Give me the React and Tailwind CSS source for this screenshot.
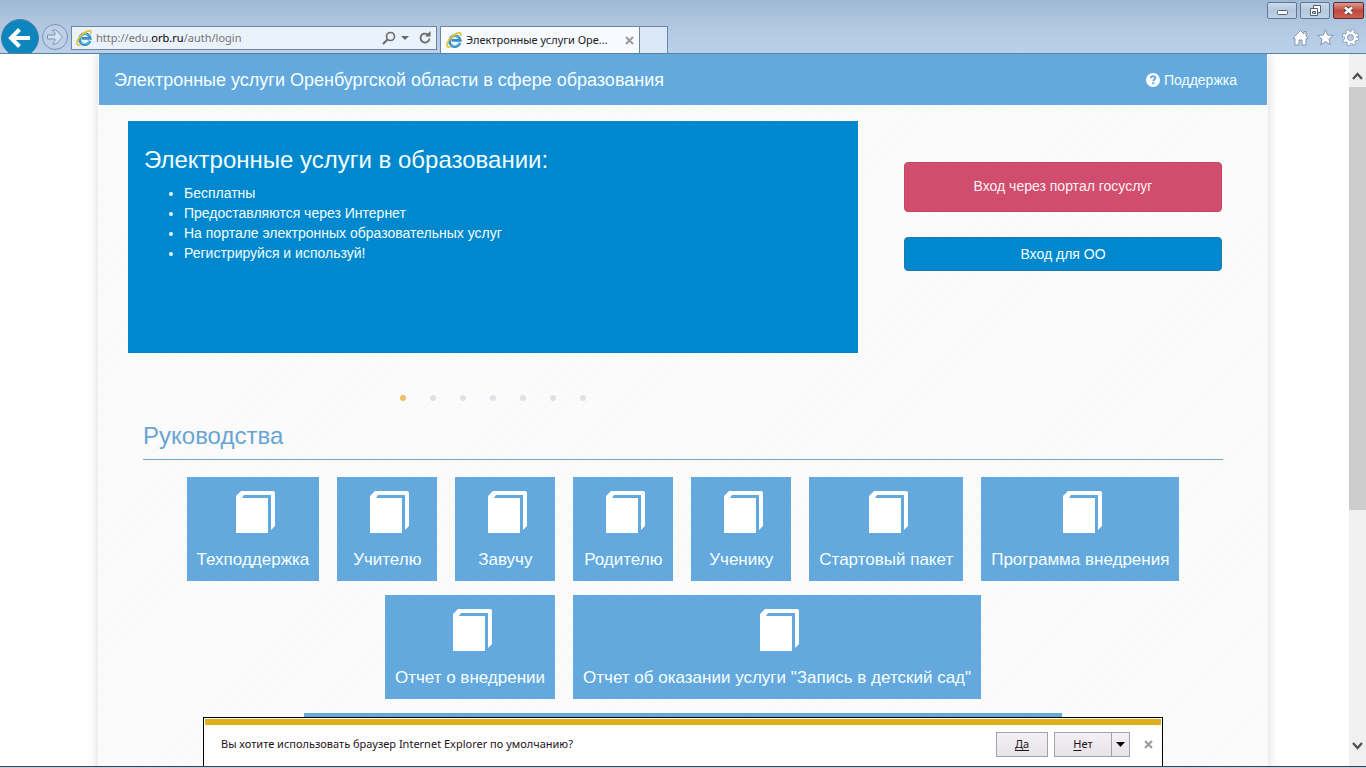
import React, { useState } from 'react';

const guides = [
    'Техподдержка',
    'Учителю',
    'Завучу',
    'Родителю',
    'Ученику',
    'Стартовый пакет',
    'Программа внедрения',
    'Отчет о внедрении',
    'Отчет об оказании услуги "Запись в детский сад"',
];

const benefits = [
    'Бесплатны',
    'Предоставляются через Интернет',
    'На портале электронных образовательных услуг',
    'Регистрируйся и используй!',
];

const BrowserLogo = () => (
    <svg className="h-4 w-4 shrink-0" viewBox="0 0 16 16" fill="none">
        <path d="M14 10.800A5.400 5.400 0 1 1 14.200 8.300H5.500" stroke="#3a8fc4" strokeWidth="2.800" />
        <path d="M13.400 10.800A4.800 4.800 0 0 1 5.300 12" stroke="#74c6e6" strokeWidth="1.200" />
        <path d="M4.300 7A4.800 4.800 0 0 1 13 6.200" stroke="#74c6e6" strokeWidth="1" />
        <path
            d="M4.600 14.400C1.500 16 .1 14.200 1.400 11 3 7 7.500 2.500 11.500 1.100c2.600-.9 3.900.2 3.100 2.900"
            stroke="#e3c534"
            strokeWidth="1.700"
        />
    </svg>
);

const BookIcon = () => (
    <svg className="h-[43px] w-11" viewBox="0 0 44 43" fill="#fff">
        <path d="M5 6 10 1H42Q44 1 44 3V36L40 40V5H13L11 8H37V43H5Z" />
    </svg>
);

const WindowControls = () => (
    <div className="flex h-[19px] justify-end gap-[3px] pt-[2px] pr-[2px]">
        <button
            aria-label="Свернуть"
            className="flex h-[17px] w-[30px] items-center justify-center rounded-[2px] border border-[#66788f] bg-linear-to-b from-[#cbdaeb] via-[#b4c7dd] to-[#bfd3ea]"
        >
            <svg width="13" height="13" viewBox="0 0 13 13">
                <rect x="1.500" y="6.500" width="10" height="4" rx="1" fill="#fff" stroke="#56606e" />
            </svg>
        </button>
        <button
            aria-label="Восстановить"
            className="flex h-[17px] w-[30px] items-center justify-center rounded-[2px] border border-[#66788f] bg-linear-to-b from-[#cbdaeb] via-[#b4c7dd] to-[#bfd3ea]"
        >
            <svg width="13" height="13" viewBox="0 0 13 13" fill="#fff" stroke="#56606e">
                <path d="M4.500 1.500h7v7h-7z" />
                <path d="M1.500 4.500h7v7h-7z" />
                <path d="M3.500 7.500h3v2h-3z" fill="#b4c7dd" />
            </svg>
        </button>
        <button
            aria-label="Закрыть"
            className="flex h-[17px] w-[31px] items-center justify-center rounded-[2px] border border-[#5b2730] bg-linear-to-b from-[#dc9a92] via-[#c04a3c] to-[#d2604e]"
        >
            <svg width="13" height="11" viewBox="0 0 13 11">
                <path d="M3 2.500 10 8.500M10 2.500 3 8.500" stroke="#5c3b42" strokeWidth="4.500" />
                <path d="M3 2.500 10 8.500M10 2.500 3 8.500" stroke="#fff" strokeWidth="2.600" />
            </svg>
        </button>
    </div>
);

const BrowserBar = () => (
    <header className="h-[54px] shrink-0 overflow-hidden border-b border-[#5f7f9f] bg-linear-to-b from-[#9fb8d4] via-[#b2c8e2] to-[#bad1ec] font-['Noto_Sans','Open_Sans',sans-serif]">
        <WindowControls />
        <div className="flex h-[34px] items-end">
            <button aria-label="Назад" className="h-[34px] w-10 shrink-0 overflow-hidden">
                <svg className="block h-[38px] w-10" viewBox="0 0 40 38" fill="none">
                    <circle cx="20" cy="19" r="18.500" fill="#0d86be" stroke="#4a7fa8" />
                    <path d="M30 19H12M19.500 10.500 11 19l8.500 8.500" stroke="#fff" strokeWidth="4" />
                </svg>
            </button>
            <button aria-label="Вперед" className="mr-[3px] mb-[2px] h-7 w-7 shrink-0">
                <svg className="block h-7 w-7" viewBox="0 0 28 28" fill="none">
                    <circle cx="15" cy="14" r="12.500" fill="#bdd0e8" stroke="#7b93b3" />
                    <path
                        d="M7.500 12h7.500V10l-2.500-3h3.500l6.500 7-6.500 7h-3.500l2.500-3v-2H7.500z"
                        fill="#d5e2f2"
                        stroke="#7b93b3"
                    />
                </svg>
            </button>
            <div className="mr-[3px] mb-[3px] flex h-6 w-[366px] items-center border border-[#6f86a3] bg-[#eaf2fb] px-1">
                <BrowserLogo />
                <a href="#" className="ml-1 flex-1 text-[11px] text-[#747474]">
                    http://edu.<span className="text-black">orb.ru</span>/auth/login
                </a>
                <button aria-label="Поиск">
                    <svg className="block" width="14" height="14" viewBox="0 0 14 14" fill="none" stroke="#6b6b6b">
                        <circle cx="8.500" cy="5.500" r="4" strokeWidth="1.600" />
                        <path d="M5.500 8.500 1 13" strokeWidth="2.200" />
                    </svg>
                </button>
                <button aria-label="История" className="mx-[5px]">
                    <svg className="block" width="8" height="5" viewBox="0 0 8 5">
                        <path d="M0 0h8L4 4z" fill="#6b6b6b" />
                    </svg>
                </button>
                <button aria-label="Обновить" className="ml-1">
                    <svg className="block" width="14" height="14" viewBox="0 0 14 14" fill="none">
                        <path d="M9.500 3.300A4.500 4.500 0 1 0 11.500 7.500" stroke="#6b6b6b" strokeWidth="1.800" />
                        <path d="M7 5.500h5.500V0z" fill="#6b6b6b" />
                    </svg>
                </button>
            </div>
            <div className="flex h-[27px] w-[200px] items-center border border-b-0 border-[#6f86a3] bg-[#f7faff] px-[5px]">
                <BrowserLogo />
                <span className="ml-1 flex-1 text-[11px] whitespace-nowrap text-[#222]">Электронные услуги Оре...</span>
                <button aria-label="Закрыть вкладку">
                    <svg className="block" width="9" height="9" viewBox="0 0 9 9">
                        <path d="M1 1l7 7M8 1 1 8" stroke="#9a9a9a" strokeWidth="2" />
                    </svg>
                </button>
            </div>
            <button
                aria-label="Новая вкладка"
                className="h-[27px] w-7 border border-b-0 border-l-0 border-[#6f86a3] bg-[#dbe8f8]"
            ></button>
            <div className="mr-[7px] mb-[7px] ml-auto flex gap-2">
                <button aria-label="Домой">
                    <svg className="block" width="17" height="17" viewBox="0 0 17 17">
                        <path
                            d="M8.500 1.500 12 5V2.500h2V7l2 2-1 1.200-1-.7v6.500h-4V11H7v5H3V9.500l-1 .7L1 9z"
                            fill="#fff"
                            stroke="#7d8ea6"
                            strokeWidth=".9"
                        />
                    </svg>
                </button>
                <button aria-label="Избранное">
                    <svg className="block" width="17" height="17" viewBox="0 0 17 17">
                        <path
                            d="m8.500.8 2.100 5.300 5.700.3-4.400 3.700 1.500 5.700-4.900-3.200-4.900 3.200 1.500-5.700L.7 6.400l5.700-.3z"
                            fill="#fff"
                            stroke="#7d8ea6"
                            strokeWidth=".9"
                        />
                    </svg>
                </button>
                <button aria-label="Сервис">
                    <svg className="block" width="17" height="17" viewBox="0 0 17 17" fill="none">
                        <circle cx="8.500" cy="8.500" r="6.500" stroke="#7d8ea6" strokeWidth="4" strokeDasharray="3 2.105" />
                        <circle cx="8.500" cy="8.500" r="4.600" stroke="#7d8ea6" strokeWidth="4" />
                        <circle
                            cx="8.500"
                            cy="8.500"
                            r="6.500"
                            stroke="#fff"
                            strokeWidth="2.600"
                            strokeDasharray="2.200 2.905"
                            strokeDashoffset="-.4"
                        />
                        <circle cx="8.500" cy="8.500" r="4.600" stroke="#fff" strokeWidth="2.600" />
                    </svg>
                </button>
            </div>
        </div>
    </header>
);

const ScrollBar = () => (
    <div className="flex w-[17px] shrink-0 flex-col bg-[#f0f0f0]">
        <button aria-label="Вверх" className="flex h-[33px] items-center justify-center pt-[10px]">
            <svg width="11" height="8" viewBox="0 0 11 8" fill="none">
                <path d="M1 7l4.500-5L10 7" stroke="#505050" strokeWidth="2.400" />
            </svg>
        </button>
        <div className="h-[423px] bg-[#cdcdcd]"></div>
        <button aria-label="Вниз" className="mt-auto flex h-[33px] items-center justify-center pb-[8px]">
            <svg width="11" height="8" viewBox="0 0 11 8" fill="none">
                <path d="M1 1l4.500 5L10 1" stroke="#505050" strokeWidth="2.400" />
            </svg>
        </button>
    </div>
);

const Slider = () => {
    const [active, setActive] = useState(0);

    return (
        <div className="flex-1">
            <div className="h-[232px] bg-[#0088cf] px-4 pt-6 text-[#f2ffff]">
                <h1 className="text-2xl leading-[30px]">Электронные услуги в образовании:</h1>
                <ul className="mt-2 list-disc pl-10 text-sm leading-5">
                    {benefits.map((item) => (
                        <li key={item}>{item}</li>
                    ))}
                </ul>
            </div>
            <div className="mt-[42px] flex justify-center gap-6">
                {[0, 1, 2, 3, 4, 5, 6].map((i) => (
                    <button
                        key={i}
                        aria-label={`Слайд ${i + 1}`}
                        onClick={() => setActive(i)}
                        className={`h-[6px] w-[6px] rounded-full ${i === active ? 'bg-[#efbe62]' : 'bg-[#dfe1e6]'}`}
                    ></button>
                ))}
            </div>
        </div>
    );
};

const DefaultBrowserPrompt = () => (
    <div className="absolute inset-x-0 bottom-0 mx-auto h-[49px] w-[960px] max-w-full border border-b-0 border-black bg-white px-px pt-px font-['Noto_Sans','Open_Sans',sans-serif]">
        <div className="h-[6px] bg-[#e0b01c]"></div>
        <div className="flex items-center pt-[7px] pr-[8px] pl-4 text-[11px] text-[#1e1220]">
            <p className="flex-1">Вы хотите использовать браузер Internet Explorer по умолчанию?</p>
            <button className="h-[25px] w-[52px] border border-[#a3a1ab] bg-linear-to-b from-[#f3f1f3] to-[#e6e4e6] underline underline-offset-2">
                Да
            </button>
            <button className="ml-[6px] h-[25px] w-[58px] border border-[#a3a1ab] bg-linear-to-b from-[#f3f1f3] to-[#e6e4e6]">
                <span className="underline underline-offset-2">Н</span>ет
            </button>
            <button
                aria-label="Другие варианты"
                className="flex h-[25px] w-[18px] items-center justify-center border border-l-0 border-[#a3a1ab] bg-linear-to-b from-[#f3f1f3] to-[#e6e4e6]"
            >
                <svg width="9" height="5" viewBox="0 0 9 5">
                    <path d="M0 0h9L4.500 5z" />
                </svg>
            </button>
            <button aria-label="Закрыть" className="ml-[14px]">
                <svg className="block" width="9" height="9" viewBox="0 0 9 9">
                    <path d="M1 1l7 7M8 1 1 8" stroke="#9a9a9a" strokeWidth="2" />
                </svg>
            </button>
        </div>
    </div>
);

const App = () => {
    return (
        <div className="flex h-screen flex-col bg-white font-['Liberation_Sans',Arial,sans-serif]">
            <BrowserBar />

            <div className="relative flex min-h-0 flex-1">
                {/* left padding balances the scroll bar so the page stays centred */}
                <div className="min-w-0 flex-1 overflow-hidden pl-[17px]">
                    <main className="mx-auto min-h-full max-w-[1170px] bg-[repeating-linear-gradient(135deg,#f8f8f8_0px,#f8f8f8_1px,#fcfcfc_1px,#fcfcfc_3px)] px-px shadow-[0_0_10px_rgba(0,0,0,0.16)]">
                        <nav className="flex h-[51px] items-center justify-between bg-[#63a9de] pr-[30px] pl-[15px] text-[#f6ffff]">
                            <a href="#" className="text-lg">
                                Электронные услуги Оренбургской области в сфере образования
                            </a>
                            <a href="#" className="flex items-center gap-1 text-sm">
                                <svg width="14" height="14" viewBox="0 0 14 14" fill="none">
                                    <circle cx="7" cy="7" r="7" fill="#fff" />
                                    <path
                                        d="M4.800 5.300C4.900 3.800 6 3.200 7.100 3.200c1.200 0 2.200.7 2.200 1.900C9.300 6.500 7.300 6.700 7.300 8.300"
                                        stroke="#63a9de"
                                        strokeWidth="1.900"
                                    />
                                    <path d="M6.300 9.300h2v2h-2z" fill="#63a9de" />
                                </svg>
                                Поддержка
                            </a>
                        </nav>

                        <div className="flex gap-[46px] pt-4 pr-[45px] pl-[29px]">
                            <Slider />
                            <div className="flex w-[318px] flex-col gap-[25px] pt-[41px]">
                                <button className="h-[50px] rounded border border-[#c4475f] bg-[#d14d6e] pb-[2px] text-sm text-[#fff0f4]">
                                    Вход через портал госуслуг
                                </button>
                                <button className="h-[34px] rounded border border-[#1f79ae] bg-[#0088cf] text-sm text-[#f2ffff]">
                                    Вход для ОО
                                </button>
                            </div>
                        </div>

                        <section className="mx-11 mt-[19px]">
                            <h2 className="border-b border-[#6fa3ce] pb-[7px] text-2xl leading-8 text-[#68a5d2]">
                                Руководства
                            </h2>
                            <div className="mt-[17px] flex flex-wrap justify-center gap-x-[18px] gap-y-[14px]">
                                {guides.map((title) => (
                                    <a
                                        key={title}
                                        href="#"
                                        className="flex h-[104px] min-w-[100px] flex-col items-center bg-[#63a9de] px-[10px] pt-[13px] text-[17px] leading-6 text-[#f6ffff]"
                                    >
                                        <BookIcon />
                                        <span className="mt-[15px]">{title}</span>
                                    </a>
                                ))}
                                <a href="#" aria-label="Руководство" className="h-[104px] w-[758px] bg-[#63a9de]"></a>
                            </div>
                        </section>
                    </main>
                </div>
                <ScrollBar />
                <DefaultBrowserPrompt />
            </div>

            <div className="h-[2px] shrink-0 border-t border-[#33475f] bg-[#c3d0dc]"></div>
        </div>
    );
};

export default App;
